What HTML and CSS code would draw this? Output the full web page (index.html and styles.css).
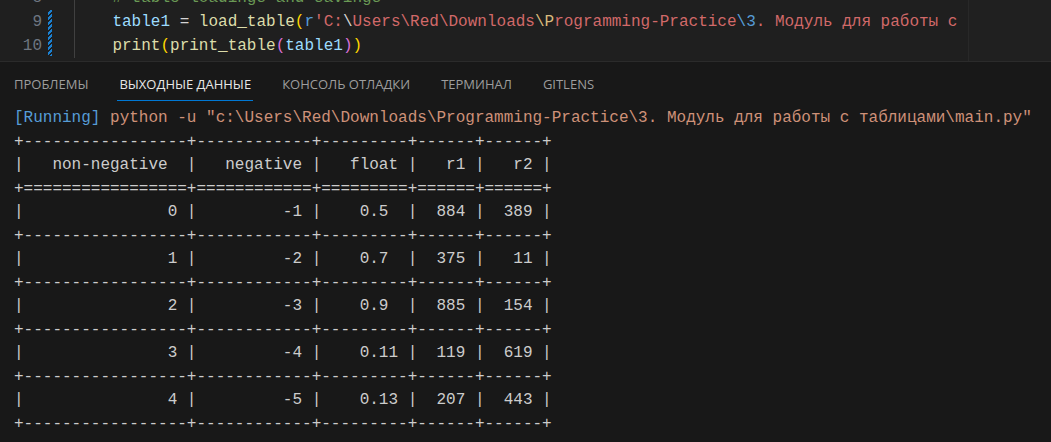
FILE: index.html
```html
<!DOCTYPE html>
<html lang="ru">
<head>
<meta charset="utf-8">
<link rel="stylesheet" href="styles.css">
</head>
<body>
<div class="editor">
  <div class="gutter">
    <div class="ln">8</div>
    <div class="ln">9</div>
    <div class="ln">10</div>
  </div>
  <div class="marks">
    <div class="mark-space"></div>
    <div class="mod"></div>
  </div>
  <div class="code">
    <div class="line"><span class="indent"></span>    <span class="cm"># table loadings and savings</span></div>
    <div class="line"><span class="indent"></span>    <span class="var">table1</span> <span class="op">=</span> <span class="fn">load_table</span><span class="b1">(</span><span class="kw">r</span><span class="re">'C:</span><span class="op">\</span><span class="re">Users\Red\Downloads</span><span class="esc">\P</span><span class="re">rogramming-Practice</span><span class="kw">\3</span><span class="re">. Модуль для работы с</span></div>
    <div class="line"><span class="indent"></span>    <span class="fn">print</span><span class="b1">(</span><span class="fn">print_table</span><span class="b2">(</span><span class="var">table1</span><span class="b2">)</span><span class="b1">)</span></div>
  </div>
  <div class="overview"></div>
</div>
<div class="panel">
  <div class="tabs">
    <div class="tab">ПРОБЛЕМЫ</div>
    <div class="tab active">ВЫХОДНЫЕ ДАННЫЕ</div>
    <div class="tab">КОНСОЛЬ ОТЛАДКИ</div>
    <div class="tab">ТЕРМИНАЛ</div>
    <div class="tab">GITLENS</div>
  </div>
  <pre class="output"><span class="run">[Running]</span> <span class="cmd">python -u "c:\Users\Red\Downloads\Programming-Practice\3. Модуль для работы с таблицами\main.py"</span>
+-----------------+------------+---------+------+------+
|   non-negative  |   negative |   float |   r1 |   r2 |
+=================+============+=========+======+======+
|               0 |         -1 |    0.5  |  884 |  389 |
+-----------------+------------+---------+------+------+
|               1 |         -2 |    0.7  |  375 |   11 |
+-----------------+------------+---------+------+------+
|               2 |         -3 |    0.9  |  885 |  154 |
+-----------------+------------+---------+------+------+
|               3 |         -4 |    0.11 |  119 |  619 |
+-----------------+------------+---------+------+------+
|               4 |         -5 |    0.13 |  207 |  443 |
+-----------------+------------+---------+------+------+</pre>
</div>
</body>
</html>
```
FILE: styles.css
```css
html, body {
  margin: 0;
  padding: 0;
}
body {
  width: 1051px;
  height: 442px;
  overflow: hidden;
  background: #181818;
}
.editor {
  height: 61px;
  background: #1f1f1f;
  display: flex;
  overflow: hidden;
  position: relative;
  border-bottom: 1px solid #2b2b2b;
  font-family: "Liberation Mono", "DejaVu Sans Mono", monospace;
  font-size: 16px;
}
.gutter {
  width: 42px;
  margin-top: -14px;
  text-align: right;
  color: #6e7681;
}
.ln {
  height: 24px;
  line-height: 24px;
}
.marks {
  width: 32px;
  margin-top: -14px;
  padding-left: 6px;
  box-sizing: border-box;
}
.mark-space {
  height: 24px;
}
.mod {
  width: 4px;
  height: 46px;
  background: repeating-linear-gradient(-45deg, #1b80d0 0 2px, #1f1f1f 2px 3.5px);
}
.code {
  flex: 1;
  margin-top: -14px;
  color: #d4d4d4;
}
.line {
  height: 24px;
  line-height: 24px;
  white-space: pre;
  position: relative;
}
.indent {
  position: absolute;
  left: 0;
  top: 0;
  bottom: 0;
  width: 1px;
  background: #404040;
}
.overview {
  position: absolute;
  left: 968px;
  top: 0;
  right: 0;
  bottom: 0;
  background: #202020;
  border-left: 1px solid #282828;
}
.cm { color: #6a9955; }
.var { color: #9cdcfe; }
.op { color: #d4d4d4; }
.fn { color: #dcdcaa; }
.b1 { color: #ffd700; }
.b2 { color: #da70d6; }
.kw { color: #569cd6; }
.re { color: #d16969; }
.esc { color: #d7ba7d; }

.panel {
  background: #181818;
}
.tabs {
  display: flex;
  gap: 27px;
  padding-left: 12px;
  font-family: "Open Sans", "Noto Sans", sans-serif;
  font-size: 13px;
}
.tab {
  height: 32px;
  padding: 6px 2px 0;
  line-height: 32px;
  color: #9d9d9d;
  border-bottom: 1px solid transparent;
}
.tab.active {
  color: #e7e7e7;
  border-bottom-color: #0078d4;
}
.output {
  margin: 0;
  padding: 6px 0 0 14px;
  font-family: "Liberation Mono", "DejaVu Sans Mono", monospace;
  font-size: 16px;
  line-height: 23.5px;
  color: #cccccc;
  white-space: pre;
}
.run { color: #569cd6; }
.cmd { color: #ce9178; }
```
